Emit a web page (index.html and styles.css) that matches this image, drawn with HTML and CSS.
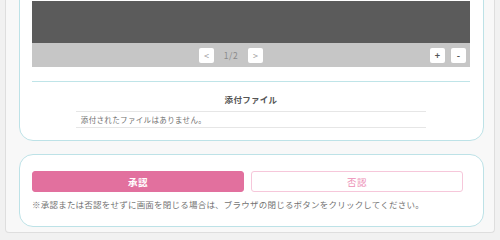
FILE: index.html
```html
<!DOCTYPE html>
<html lang="ja">
<head>
<meta charset="utf-8">
<link rel="stylesheet" href="styles.css">
</head>
<body>
<div class="panel">
  <section class="card card-top">
    <div class="viewer">
      <div class="viewer-image"></div>
      <div class="viewer-bar">
        <div class="nav">
          <span class="vbtn">&lt;</span>
          <span class="page">1/2</span>
          <span class="vbtn">&gt;</span>
        </div>
        <div class="zoom">
          <span class="vbtn strong">+</span>
          <span class="vbtn strong">-</span>
        </div>
      </div>
    </div>
    <div class="attach">
      <h3 class="attach-title">添付ファイル</h3>
      <div class="attach-table">
        <div class="attach-row">添付されたファイルはありません。</div>
      </div>
    </div>
  </section>
  <section class="card card-actions">
    <div class="buttons">
      <button class="btn approve">承認</button>
      <button class="btn reject">否認</button>
    </div>
    <p class="note">※承認または否認をせずに画面を閉じる場合は、ブラウザの閉じるボタンをクリックしてください。</p>
  </section>
</div>
</body>
</html>
```

FILE: styles.css
```css
* { box-sizing: border-box; }
html, body {
  margin: 0;
  padding: 0;
  background: #f1f1f1;
  font-family: "Noto Sans CJK JP", "Noto Sans", sans-serif;
  overflow: hidden;
}
.panel {
  margin: -30px 5px 0 5px;
  background: #f8f8f8;
  border: 1px solid #dedede;
  border-top: none;
  border-radius: 0 0 4px 4px;
  padding: 0 10px 5px 13px;
}
.card {
  background: #fff;
  border: 1px solid #bde2e7;
  border-radius: 14px;
}
.card-top {
  padding: 30px 13px 12px 12px;
}
.viewer-image {
  height: 42px;
  background: #5b5b5b;
}
.viewer-bar {
  height: 24px;
  background: #c6c6c6;
  display: flex;
  align-items: center;
  padding: 0 4px;
}
.nav {
  margin-left: auto;
  display: flex;
  align-items: center;
}
.page {
  font-size: 8.5px;
  color: #8a8a8a;
  width: 34px;
  text-align: center;
  letter-spacing: 0.5px;
}
.zoom {
  margin-left: 167px;
  display: flex;
  gap: 6px;
}
.vbtn {
  width: 15px;
  height: 15px;
  background: #fff;
  border-radius: 2px;
  display: flex;
  align-items: center;
  justify-content: center;
  font-size: 9px;
  color: #9a9a9a;
  line-height: 1;
}
.vbtn.strong {
  color: #555;
  font-weight: bold;
}
.attach {
  margin-top: 14px;
  border-top: 1px solid #bfe4e8;
}
.attach-title {
  margin: 0;
  padding: 11px 0 6px;
  font-size: 8.5px;
  line-height: 12px;
  font-weight: bold;
  color: #555;
  text-align: center;
  letter-spacing: 0.3px;
}
.attach-table {
  width: 80%;
  margin: 0 auto;
  border-top: 1px solid #e6e6e6;
  border-bottom: 1px solid #e6e6e6;
}
.attach-row {
  height: 15px;
  line-height: 15px;
  padding-left: 5px;
  font-size: 7.5px;
  letter-spacing: 0.35px;
  color: #707070;
}
.card-actions {
  margin-top: 13px;
  padding: 16px 13px 16px 12px;
}
.buttons {
  display: grid;
  grid-template-columns: 1fr 1fr;
  gap: 7px;
  padding-right: 7px;
}
.btn {
  height: 21px;
  border-radius: 3px;
  font-family: inherit;
  font-size: 9.5px;
  letter-spacing: 0.5px;
  padding: 0;
  cursor: pointer;
}
.approve {
  background: #e2709e;
  border: 1px solid #e2709e;
  color: #fff;
  font-weight: bold;
}
.reject {
  background: #fff;
  border: 1px solid #f6c7da;
  color: #ec8db4;
}
.note {
  margin: 6px 0 0;
  font-size: 8.5px;
  line-height: 12px;
  letter-spacing: 0.22px;
  color: #737373;
  white-space: nowrap;
}
```
